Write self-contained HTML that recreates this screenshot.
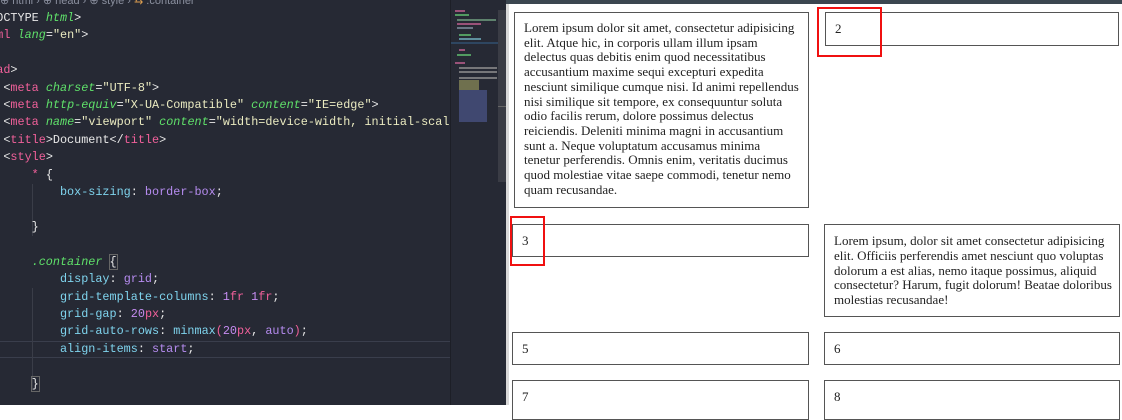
<!DOCTYPE html>
<html><head><meta charset="utf-8"><style>
body{margin:0;width:1122px;height:405px;overflow:hidden;position:relative;background:#fff}
#ed{position:absolute;left:0;top:0;width:506px;height:405px;background:#262934;overflow:hidden}
#cw{position:absolute;left:0;top:0;width:450px;height:405px;overflow:hidden}
.code{position:absolute;left:-25px;top:10px;font-family:"Liberation Mono","DejaVu Sans Mono",monospace;font-size:11.8px;line-height:17.4px;color:#e8e8e8;white-space:pre}
.t{color:#f0609a}.a{color:#5fe06a;font-style:italic}.s{color:#eaeac0}.p{color:#7fd4ee}.v{color:#b68cf0}.n{color:#c58cf0}.u{color:#f0609a}
.crumb{position:absolute;left:0;top:-6px;font:11px "Liberation Sans",sans-serif;color:#8a8f9e;white-space:nowrap}
.hl{position:absolute;left:0;top:341px;width:450px;height:15px;border-top:1px solid #3a3e4c;border-bottom:1px solid #3a3e4c}
.g{position:absolute;width:1px;background:#3a3d48}
#mm{position:absolute;left:450px;top:0;width:48px;height:405px;border-left:1px solid #1d1f27}
#sb{position:absolute;left:498px;top:10px;width:8px;height:172px;background:#3a3c45}
.r{position:absolute;border:1px solid #555;background:#fff;box-sizing:border-box;font:13px/13.6px "Liberation Serif",serif;color:#222;padding:9px 9px 8px 9px}
.red{position:absolute;border:2px solid #f01010;box-sizing:border-box}
</style></head><body>
<div id="ed">
<div id="cw">
<div class="crumb">⊕ html  ›  ⊕ head  ›  ⊕ style  ›  <span style="color:#e0a050">⇆</span> .container</div>
<div class="hl"></div>
<div class="g" style="left:32px;top:184px;height:52px"></div>
<div class="g" style="left:32px;top:288px;height:100px"></div>
<div class="code"><span style="color:#ccc">&lt;!D</span>OCTYPE <span class="a">html</span>&gt;
&lt;<span class="t">html</span> <span class="a">lang</span>=<span class="s">"en"</span>&gt;

&lt;<span class="t">head</span>&gt;
    &lt;<span class="t">meta</span> <span class="a">charset</span>=<span class="s">"UTF-8"</span>&gt;
    &lt;<span class="t">meta</span> <span class="a">http-equiv</span>=<span class="s">"X-UA-Compatible"</span> <span class="a">content</span>=<span class="s">"IE=edge"</span>&gt;
    &lt;<span class="t">meta</span> <span class="a">name</span>=<span class="s">"viewport"</span> <span class="a">content</span>=<span class="s">"width=device-width, initial-scale=1.0"</span>&gt;
    &lt;<span class="t">title</span>&gt;Document&lt;/<span class="t">title</span>&gt;
    &lt;<span class="t">style</span>&gt;
        <span class="t">*</span> {
            <span class="p">box-sizing</span>: <span class="v">border-box</span>;

        }

        <span class="a">.container</span> <span style="outline:1px solid #666">{</span>
            <span class="p">display</span>: <span class="v">grid</span>;
            <span class="p">grid-template-columns</span>: <span class="n">1</span><span class="u">fr</span> <span class="n">1</span><span class="u">fr</span>;
            <span class="p">grid-gap</span>: <span class="n">20</span><span class="u">px</span>;
            <span class="p">grid-auto-rows</span>: <span class="p">minmax</span><span class="u">(</span><span class="n">20</span><span class="u">px</span>, <span class="v">auto</span><span class="u">)</span>;
            <span class="p">align-items</span>: <span class="v">start</span>;

        <span style="outline:1px solid #666">}</span></div>
</div>
<div id="mm">
<svg width="48" height="130" style="position:absolute;left:0;top:8px">
<g stroke-width="1.5">
<line x1="4" y1="3" x2="14" y2="3" stroke="#c06090"/><line x1="4" y1="7" x2="18" y2="7" stroke="#60c070"/>
<line x1="6" y1="12" x2="45" y2="12" stroke="#70a080"/><line x1="6" y1="16" x2="30" y2="16" stroke="#c06090"/>
<line x1="6" y1="20" x2="22" y2="20" stroke="#8090a0"/><line x1="8" y1="27" x2="20" y2="27" stroke="#60c070"/>
<line x1="8" y1="31" x2="30" y2="31" stroke="#70b0c0"/><line x1="0" y1="35" x2="48" y2="35" stroke="#305070"/>
<line x1="8" y1="42" x2="14" y2="42" stroke="#c06090"/><line x1="6" y1="47" x2="20" y2="47" stroke="#60c070"/>
<line x1="4" y1="55" x2="14" y2="55" stroke="#c06090"/><line x1="8" y1="60" x2="46" y2="60" stroke="#909090"/>
<line x1="8" y1="64" x2="46" y2="64" stroke="#909090"/><line x1="8" y1="70" x2="46" y2="70" stroke="#909090"/>
</g>
<rect x="8" y="72" width="20" height="10" fill="#a0a060" opacity=".6"/>
<rect x="8" y="82" width="28" height="32" fill="#404870"/>
</svg></div>
<div id="sb"><div style="position:absolute;top:96px;left:0;width:8px;height:1px;background:#666"></div></div>
</div>
<div style="position:absolute;left:506px;top:0;width:3px;height:405px;background:#d8d8d8"></div>
<div style="position:absolute;left:506px;top:0;width:616px;height:4px;background:#3b4650"></div>

<div class="r" style="left:514px;top:12px;width:295px;height:196px;line-height:14.7px;padding-top:8px">Lorem ipsum dolor sit amet, consectetur adipisicing elit. Atque hic, in corporis ullam illum ipsam delectus quas debitis enim quod necessitatibus accusantium maxime sequi excepturi expedita nesciunt similique cumque nisi. Id animi repellendus nisi similique sit tempore, ex consequuntur soluta odio facilis rerum, dolore possimus delectus reiciendis. Deleniti minima magni in accusantium sunt a. Neque voluptatum accusamus minima tenetur perferendis. Omnis enim, veritatis ducimus quod molestiae vitae saepe commodi, tenetur nemo quam recusandae.</div>
<div class="r" style="left:825px;top:12px;width:294px;height:34px">2</div>
<div class="r" style="left:512px;top:224px;width:297px;height:33px">3</div>
<div class="r" style="left:824px;top:224px;width:296px;height:93px;line-height:14.8px;padding-right:4px">Lorem ipsum, dolor sit amet consectetur adipisicing elit. Officiis perferendis amet nesciunt quo voluptas dolorum a est alias, nemo itaque possimus, aliquid consectetur? Harum, fugit dolorum! Beatae doloribus molestias recusandae!</div>
<div class="r" style="left:512px;top:332px;width:297px;height:33px">5</div>
<div class="r" style="left:824px;top:332px;width:296px;height:33px">6</div>
<div class="r" style="left:512px;top:380px;width:297px;height:40px">7</div>
<div class="r" style="left:824px;top:380px;width:296px;height:40px">8</div>
<div class="red" style="left:817px;top:7px;width:65px;height:50px"></div>
<div class="red" style="left:510px;top:216px;width:35px;height:50px"></div>
</body></html>
